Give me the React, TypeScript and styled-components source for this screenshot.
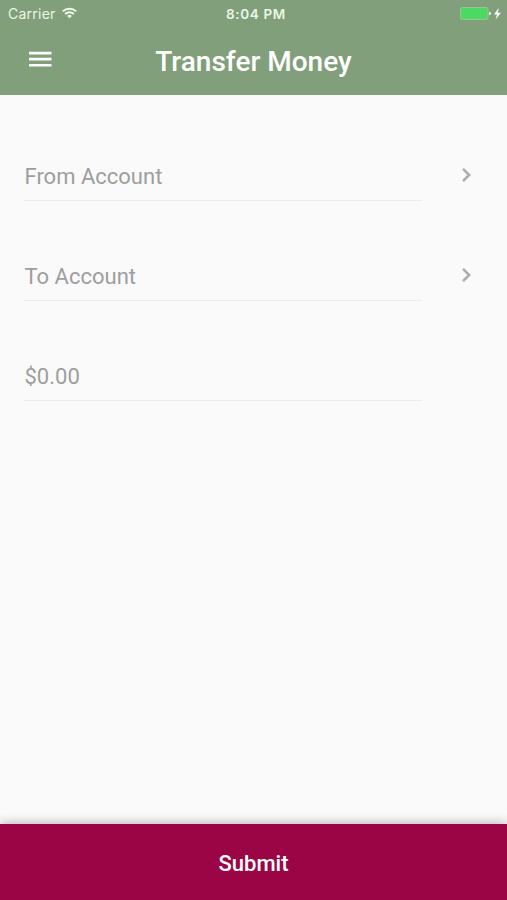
import React from "react";
import styled, { createGlobalStyle } from "styled-components";

const GlobalStyle = createGlobalStyle`
  * { box-sizing: border-box; }
  body { margin: 0; background: #fafafa; }
  button { font: inherit; border: 0; background: none; padding: 0; margin: 0; cursor: pointer; }
  svg { display: block; }
`;

const Screen = styled.div`
  width: 100%;
  height: 100vh;
  display: flex;
  flex-direction: column;
  background: #fafafa;
  font-family: Roboto, sans-serif;
`;

const Header = styled.header`
  height: 95px;
  flex: none;
  background: #819f7a;
  color: #fff;
`;

const StatusBar = styled.div`
  height: 27px;
  display: grid;
  grid-template-columns: 1fr auto 1fr;
  align-items: center;
  padding: 0 5px 0 8px;
  font-family: Inter, sans-serif;
  font-size: 14px;
  line-height: 27px;
  color: #e9f7e6;
`;

const Carrier = styled.div`
  display: flex;
  align-items: center;
  gap: 6px;
  letter-spacing: 0.25px;

  svg {
    margin-top: -2px;
  }
`;

const Clock = styled.div`
  font-size: 13.5px;
  font-weight: 600;
  letter-spacing: 0.65px;
  line-height: 25px;
  padding: 2px 0 0 2px;
`;

const Power = styled.div`
  display: flex;
  justify-content: flex-end;
`;

const TitleBar = styled.div`
  height: 68px;
  display: grid;
  grid-template-columns: 80px 1fr 80px;
  align-items: center;
`;

const MenuButton = styled.button`
  && {
    display: flex;
    justify-content: center;
    color: #fff;
    padding-bottom: 4px;
  }
`;

const Title = styled.h1`
  margin: 0;
  padding-top: 2px;
  text-align: center;
  font-size: 28px;
  font-weight: 500;
  line-height: 66px;
  white-space: nowrap;
`;

const Form = styled.main`
  flex: 1;
  padding: 56px 24px 0;
`;

const Field = styled.div`
  height: 50px;
  margin-bottom: 50px;
  display: flex;
`;

const FieldLabel = styled.div`
  width: 398px;
  height: 50px;
  padding-left: 0.5px;
  border-bottom: 1px solid #ececec;
  color: #9e9e9e;
  font-size: 22px;
  line-height: 51px;
`;

const FieldArrow = styled.div`
  padding: 15.5px 0 0 37.5px;
`;

const Submit = styled.button`
  && {
    height: 76px;
    flex: none;
    padding-top: 3px;
    background: #9b0545;
    color: #fff;
    font-size: 22px;
    font-weight: 500;
    line-height: 73px;
    box-shadow: 0 -1px 10px rgba(0, 0, 0, 0.28);
  }
`;

const WifiIcon = () => (
  <svg width="15" height="12" viewBox="0 0 15 12" fill="none" stroke="#f0fbee" strokeWidth="1.9">
    <path d="M.8 4.4a9.6 9.6 0 0 1 13.4 0M3.1 7a6.3 6.3 0 0 1 8.8 0" />
    <path d="M7.5 11.3 5.1 8.9a3.4 3.4 0 0 1 4.8 0z" fill="#f0fbee" stroke="none" />
  </svg>
);

const BatteryIcon = () => (
  <svg width="42" height="13" viewBox="0 0 42 13">
    <rect x=".5" y=".5" width="27.5" height="12" rx="2" fill="#4bd964" stroke="#9bc58f" />
    <path d="M29 4.7q2 .3 2 1.8t-2 1.8z" fill="#e9f7e6" />
    <path d="M38.8.8 34 7.4h3l-1.4 5L41 5.7h-3.2z" fill="#f3fcf0" />
  </svg>
);

const MenuIcon = () => (
  <svg width="24" height="18" viewBox="0 0 24 18" fill="#fff">
    <path d="M1 1.7h22.5v2.7H1zM1 7.8h22.5v2.7H1zM1 13.9h22.5v2.7H1z" />
  </svg>
);

const ChevronIcon = () => (
  <svg width="14" height="16" viewBox="0 0 14 16" fill="none" stroke="#acacac" strokeWidth="2.5">
    <path d="M3 1.8 9.2 8 3 14.2" />
  </svg>
);

const fields = [
  { label: "From Account", picker: true },
  { label: "To Account", picker: true },
  { label: "$0.00", picker: false },
];

export default function App() {
  return (
    <Screen>
      <GlobalStyle />
      <Header>
        <StatusBar>
          <Carrier>
            Carrier
            <WifiIcon />
          </Carrier>
          <Clock>8:04 PM</Clock>
          <Power>
            <BatteryIcon />
          </Power>
        </StatusBar>
        <TitleBar>
          <MenuButton aria-label="Menu">
            <MenuIcon />
          </MenuButton>
          <Title>Transfer Money</Title>
        </TitleBar>
      </Header>
      <Form>
        {fields.map(({ label, picker }) => (
          <Field key={label}>
            <FieldLabel>{label}</FieldLabel>
            {picker && (
              <FieldArrow>
                <ChevronIcon />
              </FieldArrow>
            )}
          </Field>
        ))}
      </Form>
      <Submit>Submit</Submit>
    </Screen>
  );
}
